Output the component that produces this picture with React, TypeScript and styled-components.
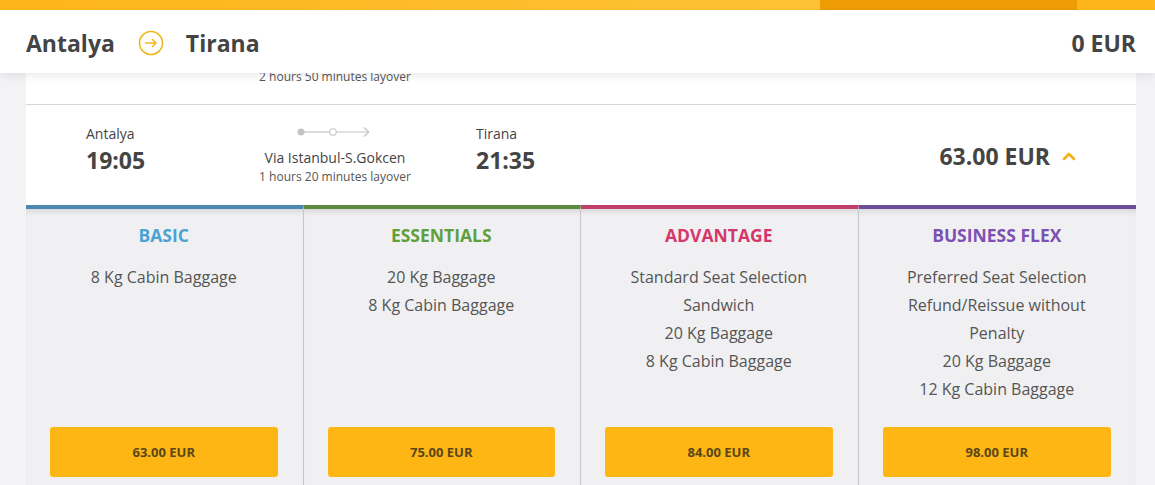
import React from "react";
import styled, { createGlobalStyle } from "styled-components";

const GlobalStyle = createGlobalStyle`
  html, body {
    margin: 0;
    padding: 0;
    background: #f3f3f6;
    font-family: "Open Sans", "Liberation Sans", sans-serif;
    color: #444;
    overflow: hidden;
  }
`;

interface Fare {
  name: string;
  color: string;
  border: string;
  features: string[];
  price: string;
}

const fares: Fare[] = [
  {
    name: "BASIC",
    color: "#4ba3d3",
    border: "#4a8aae",
    features: ["8 Kg Cabin Baggage"],
    price: "63.00 EUR"
  },
  {
    name: "ESSENTIALS",
    color: "#5fa03c",
    border: "#5c8b3d",
    features: ["20 Kg Baggage", "8 Kg Cabin Baggage"],
    price: "75.00 EUR"
  },
  {
    name: "ADVANTAGE",
    color: "#d5376c",
    border: "#c0406a",
    features: [
      "Standard Seat Selection",
      "Sandwich",
      "20 Kg Baggage",
      "8 Kg Cabin Baggage"
    ],
    price: "84.00 EUR"
  },
  {
    name: "BUSINESS FLEX",
    color: "#7d50b2",
    border: "#6d4c99",
    features: [
      "Preferred Seat Selection",
      "Refund/Reissue without Penalty",
      "20 Kg Baggage",
      "12 Kg Cabin Baggage"
    ],
    price: "98.00 EUR"
  }
];

const ProgressBar = styled.div`
  display: flex;
  height: 10px;
`;

const ProgressSegment = styled.div<{ $width: string; $bg: string }>`
  width: ${({ $width }) => $width};
  flex: ${({ $width }) => ($width === "auto" ? 1 : "none")};
  background: ${({ $bg }) => $bg};
`;

const Header = styled.header`
  position: relative;
  z-index: 2;
  display: flex;
  align-items: center;
  height: 63px;
  padding: 2px 19px 0 26px;
  box-sizing: border-box;
  background: #fff;
  box-shadow: 0 3px 8px rgba(0, 0, 0, 0.08);
`;

const City = styled.span`
  font-size: 23px;
  font-weight: 700;
  color: #444;
`;

const RouteIcon = styled.svg`
  margin: 0 22px 0 23px;
`;

const Total = styled.span`
  margin-left: auto;
  font-size: 23px;
  font-weight: 700;
  color: #444;
`;

const Card = styled.div`
  margin: 0 19px 0 26px;
  background: #fff;
`;

const PrevLeg = styled.div`
  height: 31px;
  border-bottom: 1px solid #d6d6d6;
`;

const PrevLayover = styled.div`
  width: 200px;
  margin-left: 209px;
  font-size: 12px;
  line-height: 8px;
  text-align: center;
  color: #555;
`;

const FlightRow = styled.div`
  display: flex;
  align-items: flex-start;
  height: 100px;
  box-sizing: border-box;
  padding: 18px 60px 0 60px;
`;

const Endpoint = styled.div<{ $width?: number }>`
  width: ${({ $width }) => ($width ? `${$width}px` : "auto")};
`;

const Place = styled.div`
  font-size: 14px;
  line-height: 21px;
  color: #444;
`;

const Time = styled.div`
  font-size: 23px;
  font-weight: 700;
  line-height: 32px;
  color: #444;
`;

const Stops = styled.div`
  width: 200px;
  margin-right: 41px;
  padding-top: 3px;
  display: flex;
  flex-direction: column;
  align-items: center;
`;

const Via = styled.div`
  margin-top: 10px;
  font-size: 14px;
  line-height: 20px;
  color: #444;
`;

const Layover = styled.div`
  font-size: 12px;
  line-height: 17px;
  color: #555;
`;

const PriceBox = styled.div`
  margin-left: auto;
  align-self: center;
  margin-top: -16px;
  display: flex;
  align-items: center;
  gap: 12px;
  font-size: 23px;
  font-weight: 700;
  color: #444;
`;

const FareGrid = styled.div`
  display: grid;
  grid-template-columns: repeat(4, 1fr);
`;

const FareColumn = styled.div<{ $border: string; $last: boolean }>`
  display: flex;
  flex-direction: column;
  align-items: stretch;
  padding: 15px 25px 24px 24px;
  background: #f0f0f2;
  border-top: 4px solid ${({ $border }) => $border};
  border-right: ${({ $last }) => ($last ? "none" : "1px solid #c8c8cc")};
  box-shadow: inset 0 6px 6px -4px rgba(0, 0, 0, 0.12);
  text-align: center;
`;

const FareName = styled.div<{ $color: string }>`
  font-size: 17.5px;
  font-weight: 700;
  line-height: 23px;
  color: ${({ $color }) => $color};
`;

const FeatureList = styled.ul`
  list-style: none;
  margin: 16px 0 0 0;
  padding: 0;
  flex: 1;
`;

const Feature = styled.li`
  font-size: 16px;
  line-height: 28px;
  color: #555;
  padding: 0 18px;
`;

const SelectButton = styled.button`
  margin-top: 24px;
  height: 50px;
  border: none;
  border-radius: 3px;
  background: #fdb614;
  font-family: inherit;
  font-size: 13px;
  font-weight: 700;
  color: #5a4719;
  cursor: pointer;
`;

const ArrowCircle = () => (
  <RouteIcon width="26" height="26" viewBox="0 0 26 26">
    <circle cx="13" cy="13" r="11.5" fill="none" stroke="#f3b71c" strokeWidth="1.6" />
    <path
      d="M7.5 13h10.5M14.5 9.5l3.5 3.5-3.5 3.5"
      fill="none"
      stroke="#f3b71c"
      strokeWidth="1.5"
      strokeLinecap="round"
      strokeLinejoin="round"
    />
  </RouteIcon>
);

const StopLine = () => (
  <svg width="78" height="12" viewBox="0 0 78 12">
    <circle cx="5" cy="6" r="3.5" fill="#c4c4c4" />
    <line x1="8" y1="6" x2="33" y2="6" stroke="#c4c4c4" strokeWidth="1.2" />
    <circle cx="37" cy="6" r="3.3" fill="#fff" stroke="#c4c4c4" strokeWidth="1.1" />
    <line x1="40.5" y1="6" x2="73" y2="6" stroke="#c4c4c4" strokeWidth="1.2" />
    <path d="M68 1.5l4.8 4.5-4.8 4.5" fill="none" stroke="#c4c4c4" strokeWidth="1.2" />
  </svg>
);

const ChevronUp = () => (
  <svg width="14" height="10" viewBox="0 0 14 10">
    <path d="M2 8l5-5 5 5" fill="none" stroke="#f5b217" strokeWidth="2.6" strokeLinecap="round" strokeLinejoin="round" />
  </svg>
);

export default function App() {
  return (
    <>
      <GlobalStyle />
      <ProgressBar>
        <ProgressSegment $width="820px" $bg="linear-gradient(90deg, #fdb51a, #fec236)" />
        <ProgressSegment $width="257px" $bg="#ee9e04" />
        <ProgressSegment $width="auto" $bg="#fdb71a" />
      </ProgressBar>
      <Header>
        <City>Antalya</City>
        <ArrowCircle />
        <City>Tirana</City>
        <Total>0 EUR</Total>
      </Header>
      <Card>
        <PrevLeg>
          <PrevLayover>2 hours 50 minutes layover</PrevLayover>
        </PrevLeg>
        <FlightRow>
          <Endpoint $width={149}>
            <Place>Antalya</Place>
            <Time>19:05</Time>
          </Endpoint>
          <Stops>
            <StopLine />
            <Via>Via Istanbul-S.Gokcen</Via>
            <Layover>1 hours 20 minutes layover</Layover>
          </Stops>
          <Endpoint>
            <Place>Tirana</Place>
            <Time>21:35</Time>
          </Endpoint>
          <PriceBox>
            <span>63.00 EUR</span>
            <ChevronUp />
          </PriceBox>
        </FlightRow>
        <FareGrid>
          {fares.map((fare, i) => (
            <FareColumn key={fare.name} $border={fare.border} $last={i === fares.length - 1}>
              <FareName $color={fare.color}>{fare.name}</FareName>
              <FeatureList>
                {fare.features.map((f) => (
                  <Feature key={f}>{f}</Feature>
                ))}
              </FeatureList>
              <SelectButton>{fare.price}</SelectButton>
            </FareColumn>
          ))}
        </FareGrid>
      </Card>
    </>
  );
}
